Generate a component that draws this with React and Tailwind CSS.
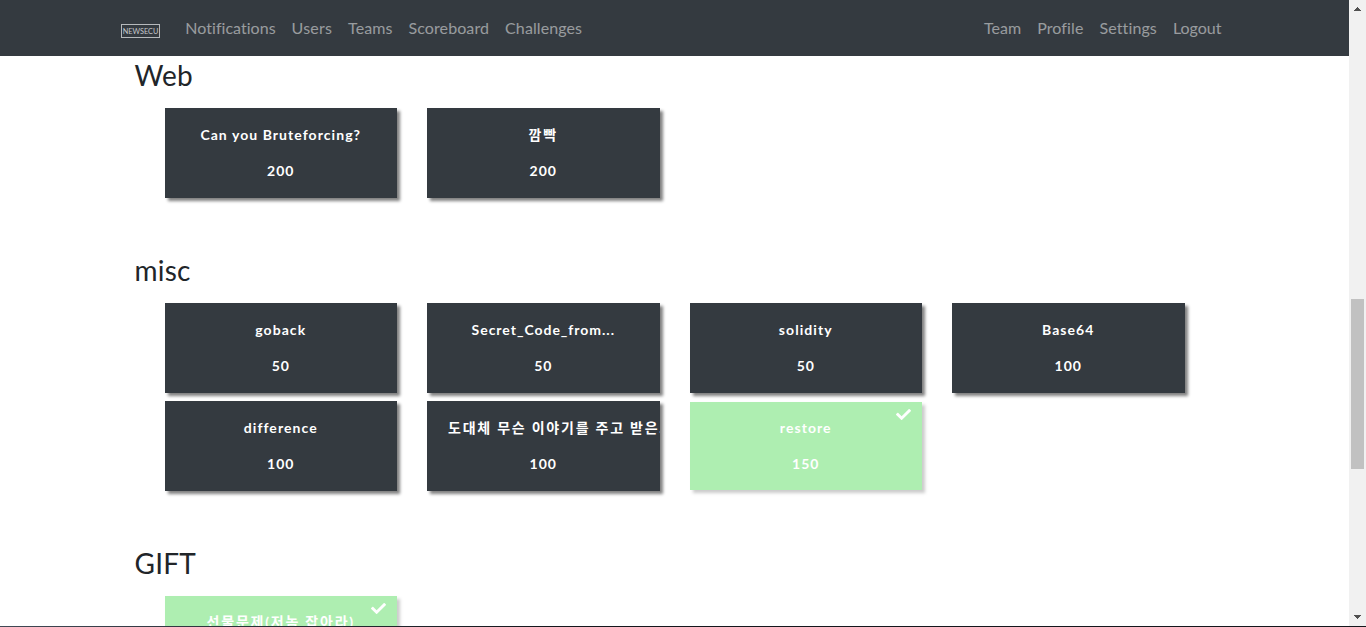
import React from "react";

const left = [
  { label: "Notifications", spacing: "tracking-[0.03px]" },
  { label: "Users", spacing: "tracking-[0.2px]" },
  { label: "Teams", spacing: "tracking-[0.1px]" },
  { label: "Scoreboard", spacing: "tracking-[0.09px]" },
  { label: "Challenges", spacing: "tracking-[0.1px]" },
];
const right = [
  { label: "Team", spacing: "tracking-normal" },
  { label: "Profile", spacing: "tracking-[0.12px]" },
  { label: "Settings", spacing: "tracking-[0.11px]" },
  { label: "Logout", spacing: "tracking-normal" },
];

const web = [
  { name: "Can you Bruteforcing?", value: 200 },
  { name: "깜빡", value: 200, korean: true },
];
const misc = [
  { name: "goback", value: 50 },
  { name: "Secret_Code_from...", value: 50, tight: true },
  { name: "solidity", value: 50 },
  { name: "Base64", value: 100 },
  { name: "difference", value: 100 },
  { name: "도대체 무슨 이야기를 주고 받은...", value: 100, korean: true, long: true },
  { name: "restore", value: 150, solved: true },
];
const gift = [{ name: "선물문제(저놈 잡아라)", value: 100, korean: true, solved: true }];

function Logo() {
  return (
    <svg className="block h-4 w-10" viewBox="0 0 40 16" fill="none">
      <rect x="0.5" y="1.5" width="38" height="13" stroke="#b6b9bc" strokeWidth="1" />
      <text x="1.8" y="10.6" fill="#c6c9cc" fontFamily="Lato, sans-serif" fontSize="7" textLength="35.5" lengthAdjust="spacingAndGlyphs">
        NEWSECU
      </text>
    </svg>
  );
}

function Check() {
  return (
    <svg className="absolute top-[5px] right-[11px] h-[15px] w-[15px]" viewBox="0 0 512 512" fill="#fff">
      <path d="M173.898 439.404l-166.4-166.4c-9.997-9.997-9.997-26.206 0-36.204l36.203-36.204c9.997-9.998 26.207-9.998 36.204 0L192 312.69 432.095 72.596c9.997-9.997 26.207-9.997 36.204 0l36.203 36.204c9.997 9.997 9.997 26.206 0 36.204l-294.4 294.401c-9.998 9.997-26.207 9.997-36.204-.001z" />
    </svg>
  );
}

function Card({ item, first }) {
  const tone = item.solved
    ? (first ? "" : "mt-px ") + "h-[88px] pt-4 bg-[#37d63e] opacity-40"
    : "h-[90px] pt-[17px] bg-[#343a40]";
  const spacing = item.korean ? "tracking-[1.78px] " : item.tight ? "tracking-[0.97px] " : "tracking-[1.06px] ";
  return (
    <button className={"relative block w-[232.5px] shadow-[3px_3px_3px_gray] text-sm leading-5 font-bold text-white " + tone}>
      {item.solved && <Check />}
      <span className="block h-full overflow-hidden">
        <span className={"block whitespace-nowrap " + spacing + (item.long ? "pl-[21px] text-left" : "")}>
          {item.name}
        </span>
        <span className="mt-4 block tracking-[1px]">{item.value}</span>
      </span>
    </button>
  );
}

function Category({ title, items, first }) {
  return (
    <section className="mb-[55px]">
      <h3 className="mb-4 text-[28px] leading-[34px] font-normal tracking-[0.2px] text-[#212529]">{title}</h3>
      <div className="grid grid-cols-[repeat(4,232.5px)] items-start gap-x-[30px] gap-y-2 pl-[30px]">
        {items.map((item) => (
          <Card key={item.name} item={item} first={first} />
        ))}
      </div>
    </section>
  );
}

function NavLinks({ links }) {
  return (
    <div className="flex">
      {links.map((l) => (
        <a key={l.label} className={"px-2 " + l.spacing}>{l.label}</a>
      ))}
    </div>
  );
}

function Scrollbar() {
  return (
    <div className="flex w-[17px] shrink-0 flex-col items-center bg-[#f1f1f1]">
      <svg className="h-[17px] w-[17px]" viewBox="0 0 17 17" fill="#505050" shapeRendering="crispEdges">
        <path d="M8 7h1v1h1v1h1v1h1v1H5v-1h1V9h1V8h1z" />
      </svg>
      <div className="mt-[282px] h-[170px] w-[13px] bg-[#c1c1c1]" />
      <svg className="mt-auto h-[17px] w-[17px]" viewBox="0 0 17 17" fill="#505050" shapeRendering="crispEdges">
        <path d="M5 6h7v1h-1v1h-1v1H9v1H8V9H7V8H6V7H5z" />
      </svg>
    </div>
  );
}

export default function App() {
  return (
    <div className="flex h-[627px] w-[1366px] flex-col overflow-hidden bg-white font-[Lato,'Noto_Sans_CJK_KR',sans-serif]">
      <div className="flex min-h-0 flex-1">
        <div className="flex min-w-0 flex-1 flex-col overflow-hidden">
          <nav className="flex h-14 shrink-0 items-center justify-between bg-[#343a40] pr-[119.5px] pl-[121px] text-base text-white/50">
            <div className="flex items-center">
              <div className="mt-1.5 mr-[16.3px]">
                <Logo />
              </div>
              <NavLinks links={left} />
            </div>
            <NavLinks links={right} />
          </nav>
          <main className="shrink-0 pt-0.5 pl-[134.5px]">
            <Category title="Web" items={web} />
            <Category title="misc" items={misc} />
            <Category title="GIFT" items={gift} first />
          </main>
        </div>
        <Scrollbar />
      </div>
      <div className="h-px shrink-0 bg-linear-to-r from-[#414955] to-[#14171c] to-40%" />
    </div>
  );
}
